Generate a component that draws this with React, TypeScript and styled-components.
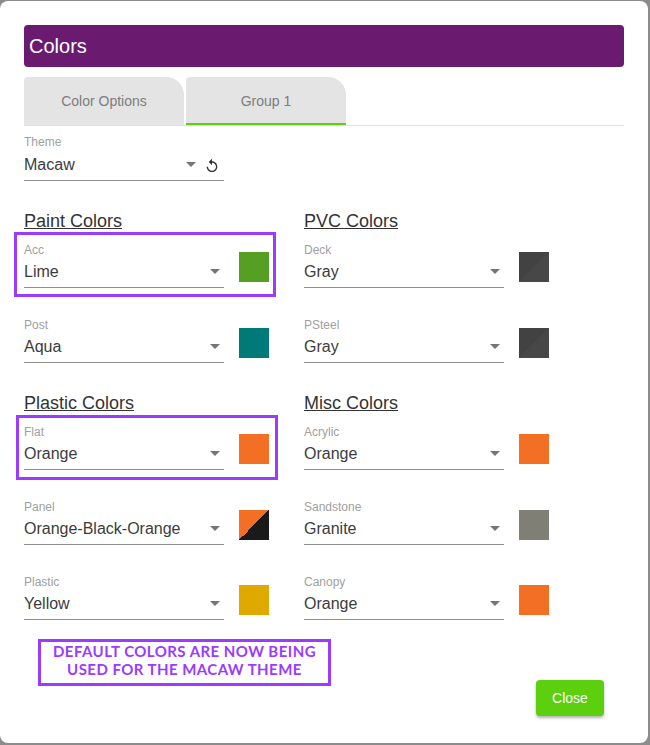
import React from "react";
import styled, { createGlobalStyle } from "styled-components";

const Global = createGlobalStyle`
  html, body { margin: 0; padding: 0; background: #8c8c8c; }
  body { font-family: "Liberation Sans", Arial, sans-serif; }
`;

const Dialog = styled.div`
  box-sizing: border-box;
  width: 648px;
  height: 742px;
  margin-top: 1px;
  padding: 24px 24px 0;
  background: #fff;
  border-radius: 8px;
  display: flex;
  flex-direction: column;
`;

const Header = styled.h1`
  margin: 0;
  height: 42px;
  padding-left: 5px;
  display: flex;
  align-items: center;
  background: #6a1b70;
  border-radius: 4px;
  color: #fff;
  font: 400 20px "Liberation Sans", Arial, sans-serif;
`;

const TabBar = styled.div`
  margin-top: 10px;
  display: flex;
  gap: 2px;
  border-bottom: 1px solid #e0e0e0;
`;

const Tab = styled.div<{ $active?: boolean }>`
  box-sizing: border-box;
  width: 160px;
  height: 48px;
  padding-top: 2px;
  display: flex;
  align-items: center;
  justify-content: center;
  background: #e4e4e4;
  border-radius: 4px 18px 0 0;
  border-bottom: 2px solid ${(p) => (p.$active ? "#5ccf0e" : "#e4e4e4")};
  color: #7d7d7d;
  font-size: 14px;
`;

const ThemeWrap = styled.div`
  width: 200px;
  padding-top: 9px;
  margin-bottom: 29px;
`;

const Columns = styled.div`
  display: grid;
  grid-template-columns: 280px 280px;
`;

const Column = styled.section`
  display: flex;
  flex-direction: column;
  gap: 10px;
`;

const Group = styled.div`
  display: flex;
  flex-direction: column;
  gap: 10px;
`;

const Heading = styled.h2`
  margin: 0;
  height: 22px;
  line-height: 22px;
  font-size: 18px;
  font-weight: 400;
  color: #333;
  text-decoration: underline;
`;

const Row = styled.div`
  position: relative;
  width: 245px;
  height: 65px;
  display: flex;
  align-items: flex-start;
  gap: 15px;
`;

const Frame = styled.div<{ $x: number; $y: number }>`
  position: absolute;
  left: ${(p) => p.$x}px;
  top: ${(p) => p.$y}px;
  box-sizing: border-box;
  width: 262px;
  height: 65px;
  border: 3px solid #9b3bff;
  pointer-events: none;
`;

const Field = styled.div`
  width: 200px;
  padding-top: 1px;
`;

const Label = styled.div`
  height: 14px;
  line-height: 14px;
  font-size: 12px;
  color: #a0a0a0;
`;

const Select = styled.div<{ $gap: number }>`
  box-sizing: border-box;
  height: 29px;
  margin-top: ${(p) => p.$gap}px;
  padding: 0 4px 2px 0;
  display: flex;
  align-items: center;
  gap: 8px;
  border-bottom: 1px solid #8f8f8f;
  color: #3c3c3c;
  font-size: 16px;
`;

const Value = styled.span`
  flex: 1;
  white-space: nowrap;
`;

const Swatch = styled.div<{ $fill: string; $nudge?: number }>`
  width: 30px;
  height: 30px;
  margin-top: ${(p) => 10 + (p.$nudge ?? 0)}px;
  background: ${(p) => p.$fill};
`;

const Footer = styled.div`
  display: flex;
  justify-content: space-between;
  align-items: flex-start;
  padding-left: 14px;
`;

const Note = styled.div`
  box-sizing: border-box;
  width: 293px;
  height: 47px;
  padding-bottom: 5px;
  display: flex;
  align-items: center;
  justify-content: center;
  text-align: center;
  border: 3px solid #9b3bff;
  color: #9b3bff;
  font: 700 15px/18px Lato, sans-serif;
  letter-spacing: 0.45px;
`;

const CloseButton = styled.button`
  width: 68px;
  height: 36px;
  margin: 41px 20px 0 0;
  border: 0;
  border-radius: 4px;
  background: #5ccf0e;
  color: #fff;
  font: 400 14px "Liberation Sans", Arial, sans-serif;
  box-shadow: 0 2px 3px rgba(0, 0, 0, 0.3);
`;

const Arrow = () => (
  <svg width="10" height="5" viewBox="0 0 10 5" style={{ flex: "none", marginBottom: 2 }}>
    <path d="M0 0h10L5 5z" fill="#757575" />
  </svg>
);

const Reset = () => (
  <svg width="16" height="16" viewBox="0 0 24 24" style={{ flex: "none", marginTop: 2 }}>
    <path
      fill="#333"
      d="M12 5V1L7 6l5 5V7c3.31 0 6 2.69 6 6s-2.69 6-6 6-6-2.69-6-6H4c0 4.42 3.58 8 8 8s8-3.58 8-8-3.58-8-8-8z"
    />
  </svg>
);

const ORANGE = "#f36f24";
const GRAY = "linear-gradient(135deg, #424242 50%, #474747 50%)";

type Item = {
  label: string;
  value: string;
  fill: string;
  nudge?: number;
  frame?: [number, number];
};

const columns: { title: string; items: Item[] }[][] = [
  [
    {
      title: "Paint Colors",
      items: [
        { label: "Acc", value: "Lime", fill: "#559f22", frame: [-10, -10] },
        { label: "Post", value: "Aqua", fill: "#007a78", nudge: 1 },
      ],
    },
    {
      title: "Plastic Colors",
      items: [
        { label: "Flat", value: "Orange", fill: ORANGE, frame: [-8, -9] },
        {
          label: "Panel",
          value: "Orange-Black-Orange",
          fill: `linear-gradient(135deg, ${ORANGE} 50%, #1a1a1a 50%)`,
          nudge: 1,
        },
        { label: "Plastic", value: "Yellow", fill: "#dfa900", nudge: 1 },
      ],
    },
  ],
  [
    {
      title: "PVC Colors",
      items: [
        { label: "Deck", value: "Gray", fill: GRAY },
        { label: "PSteel", value: "Gray", fill: GRAY, nudge: 1 },
      ],
    },
    {
      title: "Misc Colors",
      items: [
        { label: "Acrylic", value: "Orange", fill: ORANGE },
        { label: "Sandstone", value: "Granite", fill: "#7f7f76", nudge: 1 },
        { label: "Canopy", value: "Orange", fill: ORANGE, nudge: 1 },
      ],
    },
  ],
];

export default function App() {
  return (
    <>
      <Global />
      <Dialog>
        <Header>Colors</Header>
        <TabBar>
          <Tab>Color Options</Tab>
          <Tab $active>Group 1</Tab>
        </TabBar>
        <ThemeWrap>
          <Label>Theme</Label>
          <Select $gap={3}>
            <Value>Macaw</Value>
            <Arrow />
            <Reset />
          </Select>
        </ThemeWrap>
        <Columns>
          {columns.map((groups, c) => (
            <Column key={c}>
              {groups.map((g) => (
                <Group key={g.title}>
                  <Heading>{g.title}</Heading>
                  {g.items.map((it) => (
                    <Row key={it.label}>
                      {it.frame && <Frame $x={it.frame[0]} $y={it.frame[1]} />}
                      <Field>
                        <Label>{it.label}</Label>
                        <Select $gap={2}>
                          <Value>{it.value}</Value>
                          <Arrow />
                        </Select>
                      </Field>
                      <Swatch $fill={it.fill} $nudge={it.nudge} />
                    </Row>
                  ))}
                </Group>
              ))}
            </Column>
          ))}
        </Columns>
        <Footer>
          <Note>
            DEFAULT COLORS ARE NOW BEING
            <br />
            USED FOR THE MACAW THEME
          </Note>
          <CloseButton>Close</CloseButton>
        </Footer>
      </Dialog>
    </>
  );
}
